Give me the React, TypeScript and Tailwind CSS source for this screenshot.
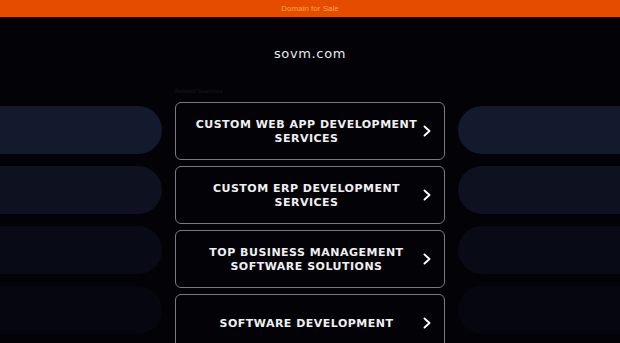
import React from 'react';

const links = [
  'Custom Web App Development Services',
  'Custom ERP Development Services',
  'Top Business Management Software Solutions',
  'Software Development',
];

const pillColors = ['bg-[#141a2e]', 'bg-[#0e1120]', 'bg-[#080a15]', 'bg-[#05060e]'];

const Chevron = () => (
  <svg width="9" height="12" viewBox="0 0 9 12" fill="none" className="shrink-0">
    <path d="M1.5 1.5L6.5 6L1.5 10.5" stroke="#ffffff" strokeWidth="1.9" strokeLinecap="round" strokeLinejoin="round" />
  </svg>
);

export default function App() {
  return (
    <div className="h-[343px] w-[620px] overflow-hidden bg-[#030307] font-['DejaVu_Sans',sans-serif]">
      <div className="flex h-[17px] items-center justify-center bg-[#e54c00]">
        <span className="font-['Liberation_Sans',sans-serif] text-[8px] text-[#f9a54f]">Domain for Sale</span>
      </div>

      <div className="flex h-[70px] items-center justify-center pt-[4px]">
        <h1 className="text-[13px] tracking-[0.05em] text-[#e8e8ee]">sovm.com</h1>
      </div>

      <div className="flex justify-between">
        <div className="flex w-[162px] flex-col gap-[12px] pt-[19px]">
          {pillColors.map((c) => (
            <div key={c} className={`h-[48px] w-full rounded-r-[24px] ${c}`} />
          ))}
        </div>

        <div className="flex w-[270px] flex-col">
          <div className="h-[15px] font-['Liberation_Sans',sans-serif] text-[6px] leading-[8px] text-[#161628]">
            Related Searches
          </div>
          <div className="flex flex-col gap-[6px]">
            {links.map((l) => (
              <a
                key={l}
                href="#"
                className="flex h-[58px] items-center rounded-[6px] border-[1.5px] border-[#7a7a80] bg-[#030307] pl-[14px] pr-[12px]"
              >
                <span className="flex-1 pt-[2px] text-center text-[11px] font-bold uppercase leading-[14.5px] tracking-[0.045em] text-[#f0f0f2]">
                  {l}
                </span>
                <Chevron />
              </a>
            ))}
          </div>
        </div>

        <div className="flex w-[162px] flex-col gap-[12px] pt-[19px]">
          {pillColors.map((c) => (
            <div key={c} className={`h-[48px] w-full rounded-l-[24px] ${c}`} />
          ))}
        </div>
      </div>
    </div>
  );
}
